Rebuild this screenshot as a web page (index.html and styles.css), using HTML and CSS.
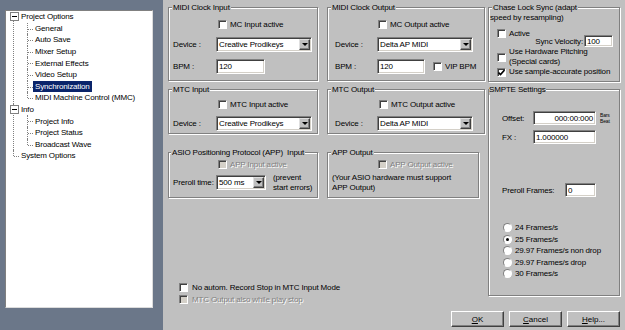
FILE: index.html
```html
<!DOCTYPE html>
<html lang="en">
<head>
  <meta charset="UTF-8" />
  <title>Project Options - Synchronization</title>
  <link rel="stylesheet" href="styles.css">
</head>
<body>
<div class="window">

  <!-- tree on the left -->
  <div class="side">
    <div class="tree">
      <ul class="lvl0">
        <li>
          <div class="row"><span class="exp"></span>Project Options</div>
          <ul class="lvl1">
            <li><div class="row"><span>General</span></div></li>
            <li><div class="row"><span>Auto Save</span></div></li>
            <li><div class="row"><span>Mixer Setup</span></div></li>
            <li><div class="row"><span>External Effects</span></div></li>
            <li><div class="row"><span>Video Setup</span></div></li>
            <li><div class="row"><span class="selected">Synchronization</span></div></li>
            <li><div class="row"><span>MIDI Machine Control (MMC)</span></div></li>
          </ul>
        </li>
        <li>
          <div class="row"><span class="exp"></span>Info</div>
          <ul class="lvl1">
            <li><div class="row"><span>Project Info</span></div></li>
            <li><div class="row"><span>Project Status</span></div></li>
            <li><div class="row"><span>Broadcast Wave</span></div></li>
          </ul>
        </li>
        <li><div class="row leaf">System Options</div></li>
      </ul>
    </div>
  </div>

  <div class="main">
    <div class="top">
      <div class="left-block">
        <div class="groups">

          <fieldset class="group g-clock-in">
            <legend>MIDI Clock Input</legend>
            <div class="body">
              <div class="check"><span class="cb"></span>MC Input active</div>
              <div class="field"><span class="lbl">Device :</span><div class="select w96"><span>Creative Prodikeys</span><i class="drop"></i></div></div>
              <div class="field"><span class="lbl">BPM :</span><div class="input w49">120</div></div>
            </div>
          </fieldset>

          <fieldset class="group g-clock-out">
            <legend>MIDI Clock Output</legend>
            <div class="body">
              <div class="check"><span class="cb"></span>MC Output active</div>
              <div class="field"><span class="lbl">Device :</span><div class="select w96"><span>Delta AP MIDI</span><i class="drop"></i></div></div>
              <div class="field"><span class="lbl">BPM :</span><div class="input w48">120</div><span class="cb vip"></span>VIP BPM</div>
            </div>
          </fieldset>

          <fieldset class="group g-mtc-in">
            <legend>MTC Input</legend>
            <div class="body">
              <div class="check"><span class="cb"></span>MTC Input active</div>
              <div class="field"><span class="lbl">Device :</span><div class="select w96"><span>Creative Prodikeys</span><i class="drop"></i></div></div>
            </div>
          </fieldset>

          <fieldset class="group g-mtc-out">
            <legend>MTC Output</legend>
            <div class="body">
              <div class="check"><span class="cb"></span>MTC Output active</div>
              <div class="field"><span class="lbl">Device :</span><div class="select w96"><span>Delta AP MIDI</span><i class="drop"></i></div></div>
            </div>
          </fieldset>

          <fieldset class="group g-app-in">
            <legend>ASIO Positioning Protocol (APP)&nbsp; Input</legend>
            <div class="body">
              <div class="check disabled"><span class="cb"></span>APP Input active</div>
              <div class="field"><span class="lbl">Preroll time:</span><div class="select w50"><span>500 ms</span><i class="drop"></i></div><span class="hint">(prevent<br>start errors)</span></div>
            </div>
          </fieldset>

          <fieldset class="group g-app-out">
            <legend>APP Output</legend>
            <div class="body">
              <div class="check disabled"><span class="cb"></span>APP Output active</div>
              <p class="hint">(Your ASIO hardware must support<br>APP Output)</p>
            </div>
          </fieldset>

        </div>

        <div class="options">
          <div class="check"><span class="cb"></span>No autom. Record Stop in MTC Input Mode</div>
          <div class="check disabled"><span class="cb"></span>MTC Output also while play stop</div>
        </div>
      </div>

      <div class="right-col">
        <fieldset class="group g-chase">
          <legend>Chase Lock Sync (adapt</legend>
          <div class="body">
            <div class="sub">speed by resampling)</div>
            <div class="check active"><span class="cb"></span>Active</div>
            <div class="velocity">Sync Velocity:<div class="input w29">100</div></div>
            <div class="check two"><span class="cb"></span>Use Hardware Pitching<br>(Special cards)</div>
            <div class="check sample"><span class="cb"><svg width="7" height="7" viewBox="0 0 7 7"><path d="M0.5 3.5 L2.5 5.5 L6.5 1" fill="none" stroke="#000" stroke-width="1.6"/></svg></span>Use sample-accurate position</div>
          </div>
        </fieldset>

        <fieldset class="group g-smpte">
          <legend>SMPTE Settings</legend>
          <div class="body">
            <div class="field offset"><span class="lbl">Offset:</span><div class="input w63 right">000:00:000</div><span class="tiny">Bars<br>Beat</span></div>
            <div class="field fx"><span class="lbl">FX :</span><div class="input w63">1.000000</div></div>
            <div class="field preroll"><span class="lbl">Preroll Frames:</span><div class="input w31">0</div></div>
            <div class="radios">
              <div class="radio"><span class="rb"></span>24 Frames/s</div>
              <div class="radio"><span class="rb on"></span>25 Frames/s</div>
              <div class="radio"><span class="rb"></span>29.97 Frames/s non drop</div>
              <div class="radio"><span class="rb"></span>29.97 Frames/s drop</div>
              <div class="radio"><span class="rb"></span>30 Frames/s</div>
            </div>
          </div>
        </fieldset>
      </div>
    </div>

    <div class="buttons">
      <button class="btn"><u>O</u>K</button>
      <button class="btn"><u>C</u>ancel</button>
      <button class="btn"><u>H</u>elp...</button>
    </div>
  </div>

</div>
</body>
</html>
```

FILE: styles.css
```css
body {
  margin: 0;
  font-family: "Liberation Sans", Arial, sans-serif;
  font-size: 8px;
  letter-spacing: -0.15px;
  color: #000;
}
.window {
  display: flex;
  width: 625px;
  height: 330px;
}

/* tree */
.side {
  width: 163px;
  background: #6b7789;
  padding: 10px 0 0 5px;
  box-sizing: border-box;
}
.tree {
  width: 148px;
  height: 298px;
  box-sizing: border-box;
  background: #fff;
  border: 1px solid;
  border-color: #808080 #dcdcdc #dcdcdc #808080;
}
.tree ul {
  list-style: none;
  margin: 0;
  padding: 0;
}
.tree li {
  position: relative;
}
.row {
  height: 11.6px;
  line-height: 11.6px;
  white-space: nowrap;
  display: flex;
  align-items: center;
}
.lvl0 > li > .row {
  padding-left: 4px;
}
.lvl0 > li > .row.leaf {
  padding-left: 15px;
}
.lvl0 > li::before,
.lvl1 > li::before {
  content: "";
  position: absolute;
  left: 7px;
  top: 0;
  bottom: 0;
  border-left: 1px dotted #808080;
}
.lvl0 > li:first-child::before {
  top: 6px;
}
.lvl0 > li:last-child::before,
.lvl1 > li:last-child::before {
  bottom: auto;
  height: 6px;
}
.lvl0 > li::after,
.lvl1 > li::after {
  content: "";
  position: absolute;
  left: 8px;
  top: 6px;
  width: 5px;
  border-top: 1px dotted #808080;
}
.lvl1 > li::before {
  left: 21px;
}
.lvl1 > li::after {
  left: 22px;
}
.lvl1 .row {
  padding-left: 27px;
}
.lvl1 .row span {
  padding: 0 2px;
  line-height: 11px;
}
.exp {
  position: relative;
  z-index: 1;
  width: 9px;
  height: 9px;
  box-sizing: border-box;
  border: 1px solid #808080;
  background: #fff;
  margin-right: 2px;
}
.exp::after {
  content: "";
  position: absolute;
  left: 1px;
  top: 3px;
  width: 5px;
  border-top: 1px solid #000;
}
.selected {
  background: #0a246a;
  color: #fff;
}

/* main panel */
.main {
  flex: 1;
  background: #c0c0c0;
  padding: 2px 5px 0;
  box-sizing: border-box;
  display: flex;
  flex-direction: column;
}
.top {
  display: flex;
  height: 303px;
}
.left-block {
  width: 317px;
  display: flex;
  flex-direction: column;
}
.groups {
  display: grid;
  grid-template-columns: 150px 158px;
  column-gap: 9px;
  align-items: start;
}
.right-col {
  width: 132px;
  margin-left: 3px;
}

/* group boxes */
.group {
  margin: 0;
  padding: 0;
  border: 1px solid #808080;
  box-shadow: 1px 1px 0 #fff, inset 1px 1px 0 #fff;
  box-sizing: border-box;
  min-width: 0;
}
.group legend {
  padding: 0 1px;
  margin-left: 3px;
  line-height: 11px;
  background: #c0c0c0;
  white-space: nowrap;
}
.body {
  padding-left: 4px;
  display: flex;
  flex-direction: column;
}
.g-clock-in, .g-clock-out {
  height: 79px;
}
.g-mtc-in, .g-mtc-out {
  height: 50px;
  margin-top: 3px;
}
.g-app-in, .g-app-out {
  height: 51px;
  margin-top: 13px;
}
.g-app-in legend {
  margin-left: 2px;
}
.g-app-out {
  width: 152px;
}
.g-clock-out .body, .g-mtc-out .body {
  padding-left: 7px;
}

.check {
  display: flex;
  align-items: center;
  height: 12px;
  white-space: nowrap;
}
.cb {
  width: 9px;
  height: 9px;
  flex: none;
  box-sizing: border-box;
  background: #fff;
  border: 1px solid;
  border-color: #808080 #fff #fff #808080;
  box-shadow: inset 1px 1px 0 #404040;
  margin-right: 3px;
  display: flex;
  align-items: center;
  justify-content: center;
}
.disabled {
  color: #808080;
  text-shadow: 1px 1px 0 #fff;
}
.disabled .cb {
  background: #d4d0c8;
}

.g-clock-in .check {
  margin: 5px 0 0 45px;
}
.g-clock-out .check {
  margin: 5px 0 0 43px;
}
.g-mtc-in .check {
  margin: 3px 0 0 45px;
}
.g-mtc-out .check {
  margin: 3px 0 0 44px;
}
.g-app-in .check {
  margin-left: 45px;
}
.g-app-out .check {
  margin-left: 46px;
}
.g-clock-in .field, .g-clock-out .field {
  margin-top: 7px;
}
.g-mtc-in .field, .g-mtc-out .field {
  margin-top: 6px;
}
.g-app-in .field {
  margin-top: 5px;
}

.field {
  display: flex;
  align-items: center;
  height: 15px;
  white-space: nowrap;
}
.lbl {
  width: 43px;
  flex: none;
}
.g-clock-out .lbl, .g-mtc-out .lbl {
  width: 42px;
}
.input, .select {
  box-sizing: border-box;
  height: 15px;
  background: #fff;
  border: 1px solid;
  border-color: #808080 #fff #fff #808080;
  box-shadow: inset 1px 1px 0 #404040, inset -1px -1px 0 #d4d0c8;
  padding: 0 2px;
  display: flex;
  align-items: center;
  white-space: nowrap;
  flex: none;
}
.select {
  padding-right: 1px;
}
.drop {
  margin-left: auto;
  width: 11px;
  height: 11px;
  box-sizing: border-box;
  background: #c0c0c0;
  border: 1px solid;
  border-color: #dfdfdf #404040 #404040 #dfdfdf;
  box-shadow: inset -1px -1px 0 #808080;
  display: flex;
  align-items: center;
  justify-content: center;
}
.drop::after {
  content: "";
  border-left: 3px solid transparent;
  border-right: 3px solid transparent;
  border-top: 3px solid #000;
}
.w96 { width: 96px; }
.w50 { width: 50px; }
.w49 { width: 49px; }
.w48 { width: 48px; }
.w63 { width: 63px; }
.w31 { width: 31px; }
.w29 { width: 29px; }
.right {
  justify-content: flex-end;
}
.cb.vip {
  margin-left: 8px;
}
.hint {
  line-height: 10px;
  margin: 0 0 0 7px;
}
p.hint {
  margin: 3px 0 0;
}

/* chase lock */
.g-chase {
  height: 80px;
}
.g-chase .body {
  padding: 0 6px 0 1px;
}
.sub {
  line-height: 10px;
}
.check.active {
  margin: 5px 0 0 7px;
  height: 11px;
}
.velocity {
  display: flex;
  align-items: center;
  justify-content: flex-end;
  height: 12px;
  margin-top: -4px;
}
.velocity .input {
  height: 12px;
  margin-left: 1px;
}
.check.two, .check.sample {
  margin-left: 7px;
  line-height: 10px;
  height: auto;
}
.check.two {
  height: 20px;
}
.check.sample {
  height: 10px;
}

/* smpte */
.g-smpte {
  height: 212px;
  margin-top: 2px;
}
.g-smpte legend {
  margin-left: 0;
  padding: 0;
}
.g-smpte .body {
  padding-left: 13px;
}
.g-smpte .field {
  height: 14px;
}
.g-smpte .input {
  height: 14px;
}
.g-smpte .lbl {
  width: 31px;
}
.offset {
  margin-top: 16px;
}
.fx {
  margin-top: 5px;
}
.preroll {
  margin-top: 39px;
}
.g-smpte .preroll .lbl {
  width: 63px;
}
.tiny {
  font-size: 5px;
  line-height: 6px;
  margin-left: 4px;
}
.radios {
  margin-top: 25px;
}
.radio {
  display: flex;
  align-items: center;
  height: 11.5px;
  white-space: nowrap;
}
.rb {
  width: 9px;
  height: 9px;
  box-sizing: border-box;
  border-radius: 50%;
  background: #fff;
  border: 1px solid;
  border-color: #808080 #fff #fff #808080;
  margin: 0 3px 0 1px;
  display: flex;
  align-items: center;
  justify-content: center;
}
.rb.on::after {
  content: "";
  width: 3px;
  height: 3px;
  border-radius: 50%;
  background: #000;
}

/* bottom */
.options {
  margin-top: auto;
  padding-left: 11px;
}
.options .cb {
  margin-right: 4px;
}
.buttons {
  display: flex;
  justify-content: flex-end;
  gap: 5px;
  margin-top: 6px;
}
.btn {
  width: 53px;
  height: 16px;
  box-sizing: border-box;
  background: #c0c0c0;
  border: 1px solid;
  border-color: #fff #404040 #404040 #fff;
  box-shadow: inset -1px -1px 0 #808080;
  font: inherit;
  color: #000;
  padding: 0;
}
```
